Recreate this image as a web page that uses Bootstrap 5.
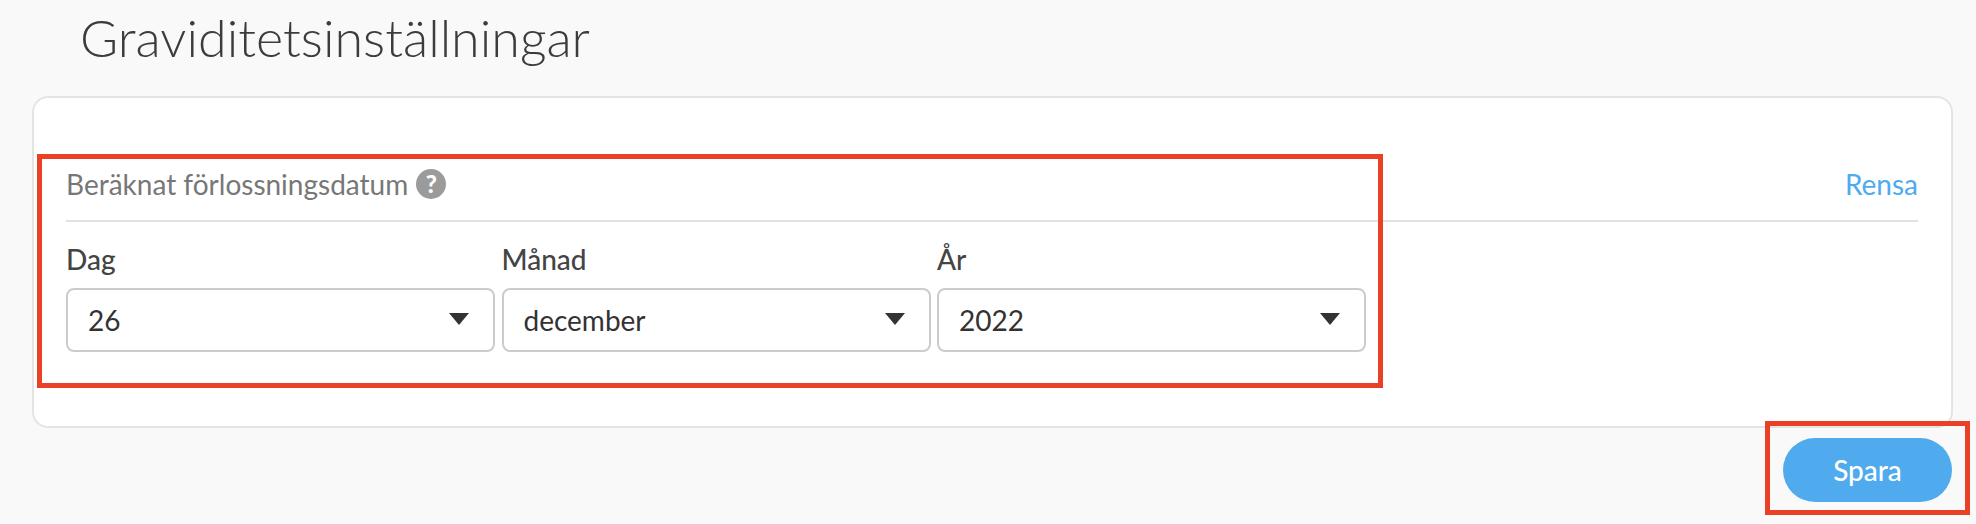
<!DOCTYPE html>
<html lang="sv">
<head>
<meta charset="utf-8">
<title>Graviditetsinställningar</title>
<link href="https://cdn.jsdelivr.net/npm/bootstrap@5.3.0/dist/css/bootstrap.min.css" rel="stylesheet">
<style>
html,body{height:100%}
body{background:#f9f9f9;font-family:"Lato","Liberation Sans",sans-serif;color:#444;overflow:hidden}
.pg{position:relative;height:524px;padding:0 24px 0 32px}
.pg-title{font-family:"Lato",sans-serif;font-weight:300;font-size:52px;line-height:58px;color:#3c3c3c;margin:0;padding:8px 0 0 48px;height:96px}
.pg-card{background:#fff;border:2px solid #e4e4e4;border-radius:16px;height:332px;padding:0 33px 0 32px;margin-right:-1px}
.sec-head{height:124px;border-bottom:2px solid #e2e2e2;padding-bottom:19px}
.sec-title{font-size:28px;line-height:34px;color:#777;margin:0}
.help-dot{display:inline-flex;width:30px;height:30px;border-radius:50%;background:#9b9b9b;color:#fff;font-size:24px;font-weight:900;align-items:center;justify-content:center;line-height:1}
.clear-link{color:#4dabee;font-size:28px;line-height:34px;text-decoration:none}
.sel-grid{display:grid;grid-template-columns:429px 429px 429px;column-gap:6.5px;margin-top:21px}
.fld-label{font-size:28px;font-weight:500;line-height:32px;color:#444;margin-bottom:13px;display:block}
.fld-select{height:64px;border:2px solid #ccc;border-radius:8px;font-size:28px;color:#333;padding:0 50px 0 20px;background-color:#fff;background-position:right 24px top 23px;background-size:20px 12px;
background-image:url("data:image/svg+xml,%3Csvg xmlns='http://www.w3.org/2000/svg' viewBox='0 0 20 12'%3E%3Cpath fill='%23333' d='M0 0h20L10 12z'/%3E%3C/svg%3E");font-family:"Lato",sans-serif}
.save-btn{background:#4fabee;border:0;color:#fff;font-size:28px;font-weight:500;border-radius:32px;width:169px;height:64px;padding:0;margin-top:10px}
.mark-box{position:absolute;border:5px solid #ea4025;pointer-events:none}
.mark-a{left:37px;top:154px;width:1346px;height:234px}
.mark-b{left:1765px;top:421px;width:205px;height:94px}
</style>
</head>
<body>
<div class="pg">
  <h1 class="pg-title">Graviditetsinställningar</h1>
  <div class="pg-card">
    <div class="sec-head d-flex justify-content-between align-items-end">
      <p class="sec-title d-flex align-items-center">Beräknat förlossningsdatum <span class="help-dot ms-2">?</span></p>
      <a href="#" class="clear-link">Rensa</a>
    </div>
    <div class="sel-grid">
      <div>
        <label class="fld-label" for="d">Dag</label>
        <select id="d" class="form-select fld-select"><option>26</option></select>
      </div>
      <div>
        <label class="fld-label" for="m">Månad</label>
        <select id="m" class="form-select fld-select"><option>december</option></select>
      </div>
      <div>
        <label class="fld-label" for="y">År</label>
        <select id="y" class="form-select fld-select"><option>2022</option></select>
      </div>
    </div>
  </div>
  <div class="d-flex justify-content-end">
    <button type="button" class="btn save-btn">Spara</button>
  </div>
  <div class="mark-box mark-a"></div>
  <div class="mark-box mark-b"></div>
</div>
<script src="https://cdn.jsdelivr.net/npm/bootstrap@5.3.0/dist/js/bootstrap.bundle.min.js"></script>
</body>
</html>
